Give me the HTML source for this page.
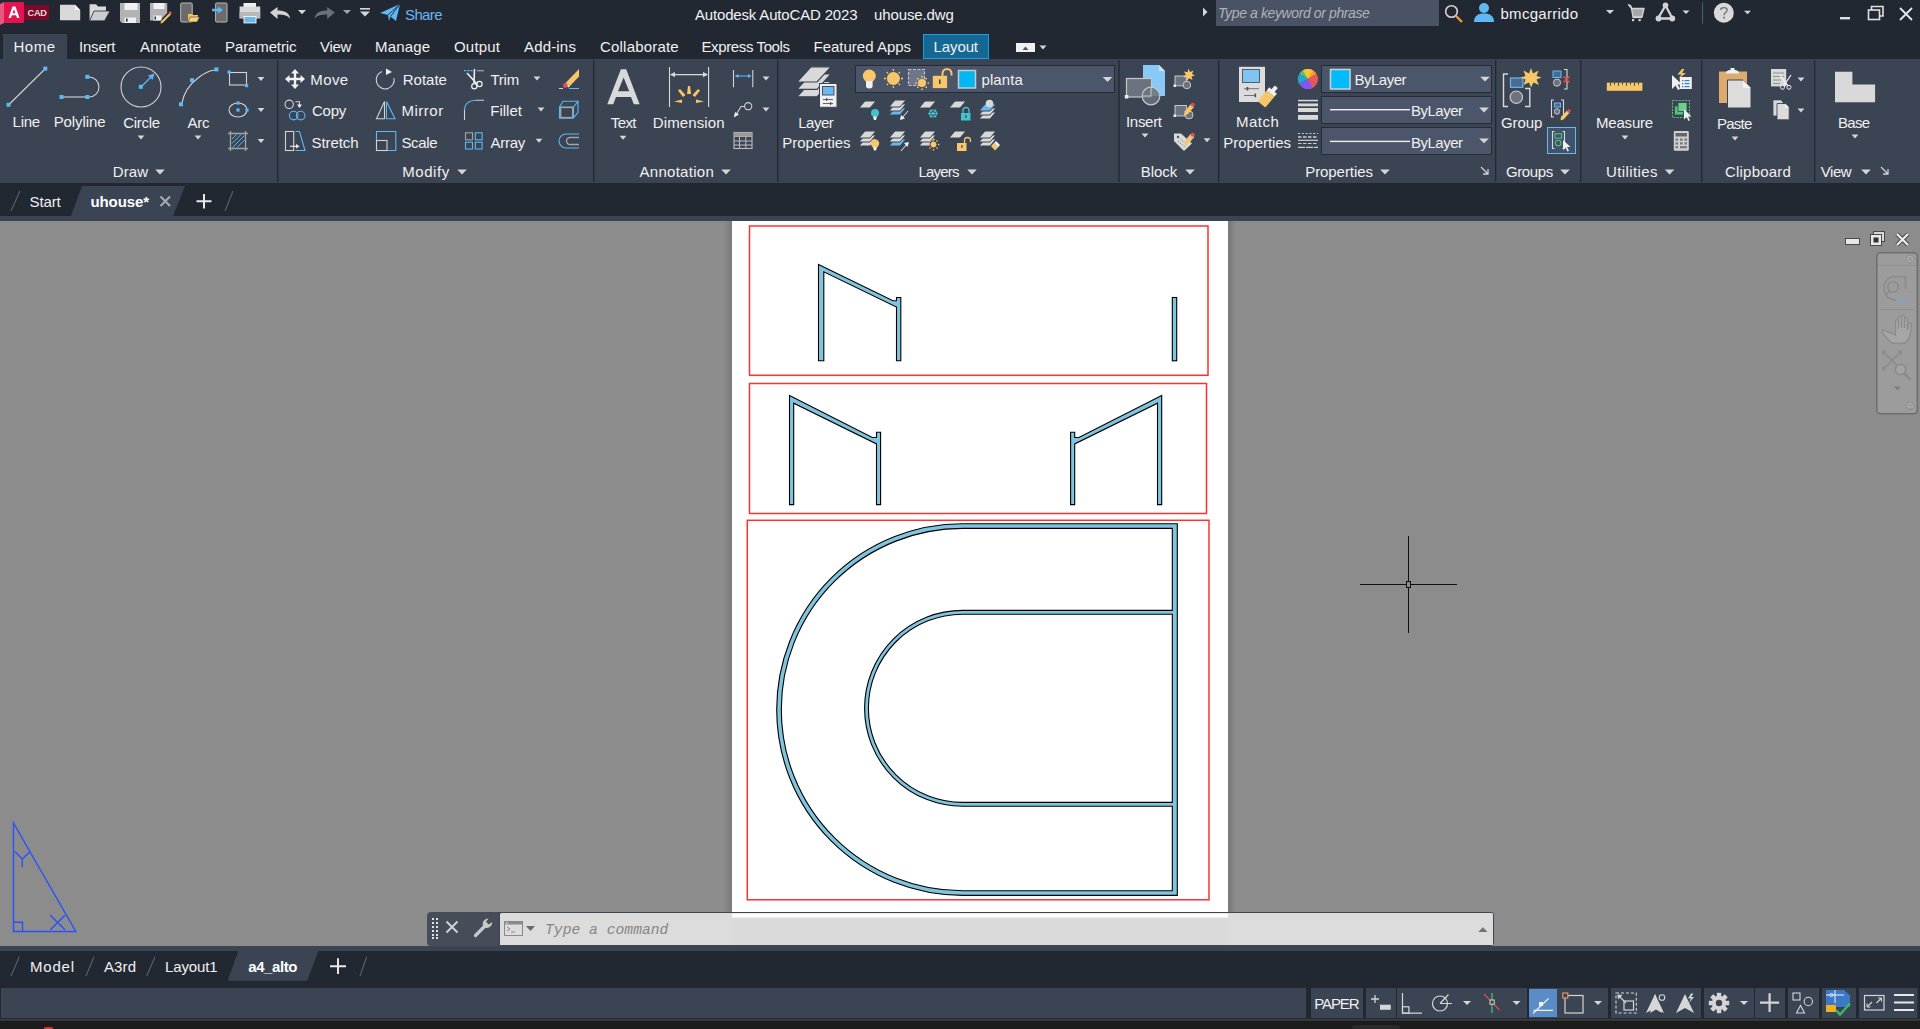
<!DOCTYPE html>
<html><head><meta charset="utf-8">
<style>
*{margin:0;padding:0;box-sizing:border-box}
html,body{width:1920px;height:1029px;overflow:hidden;background:#222832;font-family:"Liberation Sans",sans-serif;color:#f0f0f0}
.a{position:absolute}
.t{position:absolute;white-space:nowrap;line-height:15px;font-size:15px}
svg{position:absolute;overflow:visible}
</style></head><body>
<!-- backgrounds -->
<div class="a" style="left:0;top:0;width:1920px;height:59px;background:#222832"></div>
<div class="a" style="left:0;top:59px;width:1920px;height:124px;background:#3b4453"></div>
<div class="a" style="left:0;top:183px;width:1920px;height:33px;background:#222832"></div>
<div class="a" style="left:0;top:216px;width:1920px;height:5px;background:#3b4453"></div>
<div id="draw" class="a" style="left:0;top:221px;width:1920px;height:725px;background:#8c8c8c;overflow:hidden"></div>

<!-- paper -->
<div class="a" style="left:723px;top:221px;width:9px;height:700px;background:linear-gradient(90deg,#8c8c8c,#7c7c7c)"></div>
<div class="a" style="left:732px;top:221px;width:496px;height:700px;background:#fff"></div>
<div class="a" style="left:1228px;top:221px;width:8px;height:700px;background:linear-gradient(90deg,#7b7b7b 20%,#8c8c8c)"></div>
<svg class="a" style="left:0;top:0" width="1920" height="1029" viewBox="0 0 1920 1029">
 <g fill="none" stroke="#ff3030" stroke-width="1.5">
  <rect x="749.5" y="226" width="458.5" height="149.3"/>
  <rect x="749.5" y="383.5" width="457" height="130"/>
  <rect x="747.3" y="520.3" width="461.7" height="379.5"/>
 </g>
 <g fill="#80c4de" stroke="#000" stroke-width="1.1" stroke-linejoin="miter">
  <path d="M818.5,264.5 L893,300.8 H896.5 V297.5 H900.8 V360.8 H896.5 V307 L823.8,271.8 V360.8 H818.5 Z"/>
  <rect x="1172.3" y="297.5" width="4.4" height="63.3"/>
  <path d="M789.5,395.5 L872.3,437.5 H876.5 V432.3 H880.6 V504.6 H876.5 V443.9 L793.7,403.2 V504.6 H789.5 Z"/>
  <path d="M1161.7,395.5 L1078.9,437.5 H1074.7 V432.3 H1070.6 V504.6 H1074.7 V443.9 L1157.5,403.2 V504.6 H1161.7 Z"/>
  <path d="M1177.3,523.8 H962.5 A185.8 185.8 0 0 0 962.5,895.4 H1177.3 Z"/>
 </g>
 <g fill="#fff" stroke="#000" stroke-width="1.1">
  <path d="M1172.3,528.4 H962.5 A181.2 181.2 0 0 0 962.5,890.8 H1172.3 V806.2 H962.5 A97.9 97.9 0 0 1 962.5,610.4 H1172.3 Z"/>
  <path d="M1172.3,614.2 H962.5 A94.1 94.1 0 0 0 962.5,802.4 H1172.3 Z"/>
 </g>
 <!-- crosshair -->
 <g stroke="#111" stroke-width="1" fill="none" shape-rendering="crispEdges">
  <line x1="1360" y1="584.5" x2="1457" y2="584.5"/>
  <line x1="1408.5" y1="536" x2="1408.5" y2="633"/>
  <rect x="1406.5" y="581.5" width="4" height="6" fill="#8c8c8c"/>
 </g>
 <!-- UCS -->
 <g stroke="#2452ff" stroke-width="1.4" fill="none">
  <path d="M13.5,823 V931.5 H75.8 Z"/>
  <path d="M13.5,922.3 H22.5 V931.5"/>
  <path d="M15,851.8 L22.3,859 L29.9,851.8 M22.3,859 V867"/>
  <path d="M50.3,915.2 L64.9,929.8 M64.9,915.2 L50.3,929.8"/>
 </g>
</svg>
<!-- viewport controls -->
<svg class="a" style="left:0;top:0" width="1920" height="1029">
 <rect x="1845.5" y="238.5" width="14" height="6" fill="#e8e8e8" stroke="#4a4a4a" stroke-width="1"/>
 <rect x="1873.5" y="231.5" width="11" height="10" fill="#d8d8d8" stroke="#4a4a4a" stroke-width="1"/>
 <rect x="1870.5" y="234.5" width="11" height="11" fill="#e8e8e8" stroke="#4a4a4a" stroke-width="1"/>
 <rect x="1873.5" y="237.5" width="5" height="5" fill="#303030"/>
 <path d="M1897,234 L1908,245 M1908,234 L1897,245" stroke="#4a4a4a" stroke-width="4.2"/>
 <path d="M1897,234 L1908,245 M1908,234 L1897,245" stroke="#eeeeee" stroke-width="2.2"/>
 <rect x="1876.8" y="252.8" width="40.5" height="161" rx="4" fill="#9c9c9c" stroke="#6e6e6e" stroke-width="1.6"/>
 <line x1="1878.5" y1="265.5" x2="1916" y2="265.5" stroke="#8d8d8d" stroke-width="1"/>
 <line x1="1880" y1="309.5" x2="1914" y2="309.5" stroke="#8d8d8d" stroke-width="1"/>
 <circle cx="1910" cy="259" r="4" fill="#a9a9a9" stroke="#8d8d8d" stroke-width="1"/>
 <path d="M1908,257 L1912,261 M1912,257 L1908,261" stroke="#8d8d8d" stroke-width="1"/>
 <g fill="none" stroke="#8b8b8b" stroke-width="1.6">
  <path d="M1884.5,292 A11.5,11.5 0 0 1 1893,276.8 H1905.5 V289"/>
  <path d="M1884.5,292 C1886,297 1890,300 1896,300"/>
  <circle cx="1893" cy="287" r="5.3"/>
  <path d="M1889.5,291 L1886,295"/>
 </g>
 <text x="1896.5" y="303.5" font-size="9.5" font-weight="bold" fill="#8c9fbd" font-family="Liberation Sans">2D</text>
 <path d="M1885.5,331 C1883,329 1881.5,331 1883,333.5 L1889.5,341.5 C1891,343 1893,343.5 1896,343.5 H1901 C1906,343.5 1909,340 1910,335 L1911.5,325 C1912,322.5 1909,322 1908.5,324.5 L1907.5,330 V319.5 C1907.5,317 1904.5,317 1904.5,319.5 V328 V317 C1904.5,314.5 1901.5,314.5 1901.5,317 V328 V318 C1901.5,315.5 1898.5,315.5 1898.5,318 V329 V321.5 C1898.5,319 1895.5,319 1895.5,321.5 V335 Z" fill="#a6a6a6" stroke="#8b8b8b" stroke-width="1.3"/>
 <g fill="none" stroke="#8b8b8b" stroke-width="1.6">
  <path d="M1883,351.5 L1901,369.5 M1883,369.5 L1901,351.5"/>
  <circle cx="1900.5" cy="369.5" r="5.2" fill="#a3a3a3"/>
  <path d="M1904,373.5 L1910.5,379.5" stroke-width="2.6"/>
 </g>
 <path d="M1882,350.5 H1887 L1882,355.5 Z M1902,350.5 H1897 L1902,355.5 Z M1882,370.5 H1887 L1882,365.5 Z" fill="#8b8b8b"/>
 <path d="M1894,386.5 H1901 L1897.5,390.5 Z" fill="#7f7f7f"/>
 <circle cx="1910" cy="406" r="4" fill="#a9a9a9" stroke="#8d8d8d" stroke-width="1"/>
 <path d="M1907.5,405 H1912.5 M1908,407.5 L1910,409 L1912,407.5" stroke="#8d8d8d" stroke-width="0.9" fill="none"/>
</svg>
<!-- command line -->
<div class="a" style="left:732px;top:913px;width:496px;height:5px;background:linear-gradient(#ffffff 70%,#e4e4e4)"></div>
<div class="a" style="left:427px;top:912px;width:76px;height:34px;background:#474d58;border-radius:4px 0 0 4px"></div>
<div class="a" style="left:499px;top:912px;width:995px;height:34px;border:1px solid #40454e;border-radius:3px;box-shadow:inset 0 0 0 1px #ececec;background:linear-gradient(#ffffff00 0,#ffffff00 5px,#dcdcdc 5px)"></div>
<div class="a" style="left:500px;top:913px;width:232px;height:32px;background:#dcdcdc;border-radius:2px 0 0 0"></div>
<div class="a" style="left:1228px;top:913px;width:265px;height:32px;background:#dcdcdc;border-radius:0 2px 0 0"></div>
<div class="a" style="left:732px;top:918px;width:496px;height:27px;background:#dadada"></div>
<svg class="a" style="left:0;top:0" width="1920" height="1029">
 <g fill="#e0e0e0">
  <rect x="432" y="918" width="2" height="2"/><rect x="436" y="918" width="2" height="2"/>
  <rect x="432" y="922" width="2" height="2"/><rect x="436" y="922" width="2" height="2"/>
  <rect x="432" y="926" width="2" height="2"/><rect x="436" y="926" width="2" height="2"/>
  <rect x="432" y="930" width="2" height="2"/><rect x="436" y="930" width="2" height="2"/>
  <rect x="432" y="934" width="2" height="2"/><rect x="436" y="934" width="2" height="2"/>
  <rect x="432" y="937" width="2" height="2"/><rect x="436" y="937" width="2" height="2"/>
 </g>
 <path d="M446.5,921.5 L457.5,932.5 M457.5,921.5 L446.5,932.5" stroke="#d0d0d0" stroke-width="2"/>
 <path d="M475.5,935.5 L485.5,925.5" stroke="#c8c8c8" stroke-width="3.2" stroke-linecap="round"/>
 <path d="M484,927 A5.2,5.2 0 0 1 488.5,918.5 L486,921.8 L488.8,924.6 L492,922 A5.2,5.2 0 0 1 484,927 Z" fill="#c8c8c8"/>
 <rect x="504.5" y="921.5" width="18" height="14" fill="none" stroke="#8a8a8a"/>
 <rect x="504.5" y="921.5" width="18" height="3" fill="#8a8a8a"/>
 <rect x="506" y="922.3" width="1.5" height="1.5" fill="#e0e0e0"/>
 <path d="M507,927 L510,929 L507,931 M511,932 H515" stroke="#8a8a8a" fill="none"/>
 <path d="M526,926 H535 L530.5,931 Z" fill="#6a6a6a"/>
 <path d="M1478.2,932 H1487.6 L1482.9,927.2 Z" fill="#727272"/>
</svg>
<div class="t" style="left:545px;top:923px;font-family:'Liberation Mono',monospace;font-style:italic;font-size:14.7px;color:#858585">Type a command</div>

<div class="a" style="left:0;top:946px;width:1920px;height:5px;background:#3b4453"></div>
<div class="a" style="left:0;top:951px;width:1920px;height:37px;background:#222832"></div>
<div class="a" style="left:0;top:988px;width:1920px;height:30px;background:#3b4453"></div>
<div class="a" style="left:0;top:1018px;width:1920px;height:2px;background:#252b35"></div>
<div class="a" style="left:0;top:1020px;width:1920px;height:9px;background:#1c1c1c"></div>

<!--RIBBON-->
<div class="a" style="left:3px;top:34px;width:64px;height:25px;background:#3b4453"></div>
<div class="a" style="left:923px;top:34px;width:66px;height:25px;background:#156894;border:1px solid #16a0e6"></div>
<div class="a" style="left:1216px;top:0;width:223px;height:26px;background:#4a5366"></div>
<!-- combos -->
<div class="a" style="left:855px;top:65px;width:260px;height:28px;background:#4c566a;border:1px solid #262c36"></div>
<div class="a" style="left:1321px;top:65px;width:171px;height:28px;background:#4c566a;border:1px solid #262c36"></div>
<div class="a" style="left:1321px;top:96px;width:171px;height:28px;background:#4c566a;border:1px solid #262c36"></div>
<div class="a" style="left:1321px;top:127px;width:171px;height:28px;background:#4c566a;border:1px solid #262c36"></div>
<div class="a" style="left:1547px;top:127px;width:29px;height:27px;background:#41536b;border:1.5px solid #68b8f2"></div>
<svg class="a" style="left:0;top:0" width="1920" height="1029">
<defs>
 <path id="dd" d="M-3.4,-2 H3.4 L0,2 Z" fill="#d6d6d6"/>
 <path id="ddp" d="M-4.8,-2.4 H4.8 L0,2.4 Z" fill="#d6d6d6"/>
 <path id="lay" d="M6,0 H17 L11,7 H0 Z" fill="#d9d9d9" stroke="#3b4453" stroke-width="1"/>
 <path id="layb" d="M6,0 H17 L11,7 H0 Z" fill="#68b8f2" stroke="#3b4453" stroke-width="1"/>
</defs>
<!-- panel separators -->
<g fill="#232933">
 <rect x="277" y="60" width="1.3" height="122"/><rect x="593" y="60" width="1.3" height="122"/>
 <rect x="777" y="60" width="1.3" height="122"/><rect x="1118.3" y="60" width="1.3" height="122"/>
 <rect x="1218" y="60" width="1.3" height="122"/><rect x="1495" y="60" width="1.3" height="122"/>
 <rect x="1580" y="60" width="1.3" height="122"/><rect x="1701" y="60" width="1.3" height="122"/>
 <rect x="1814" y="60" width="1.3" height="122"/>
</g>
<!-- panel label arrows -->
<use href="#ddp" x="160" y="172"/><use href="#ddp" x="462" y="172"/><use href="#ddp" x="726" y="172"/>
<use href="#ddp" x="972" y="172"/><use href="#ddp" x="1190" y="172"/><use href="#ddp" x="1385" y="172"/>
<use href="#ddp" x="1565" y="172"/><use href="#ddp" x="1669.6" y="172"/><use href="#ddp" x="1866" y="172"/>
<path d="M1481,167 L1488,174 M1488,169 V174 H1483" stroke="#cfcfcf" stroke-width="1.3" fill="none"/>
<path d="M1881,167 L1888,174 M1888,169 V174 H1883" stroke="#cfcfcf" stroke-width="1.3" fill="none"/>
<!-- small dropdowns -->
<use href="#dd" x="141" y="137.6"/><use href="#dd" x="198" y="137.6"/>
<use href="#dd" x="261" y="79"/><use href="#dd" x="261" y="110"/><use href="#dd" x="261" y="141"/>
<use href="#dd" x="537" y="78.5"/><use href="#dd" x="541" y="109.6"/><use href="#dd" x="539" y="140.7"/>
<use href="#dd" x="623" y="137.7"/><use href="#dd" x="766" y="78.5"/><use href="#dd" x="766" y="109.6"/>
<use href="#dd" x="1145" y="135.5"/><use href="#dd" x="1207" y="140.2"/>
<use href="#dd" x="1625" y="137.6"/><use href="#dd" x="1735" y="138.5"/><use href="#dd" x="1801" y="79.5"/><use href="#dd" x="1801" y="110.4"/>
<use href="#dd" x="1855" y="136.5"/>
<use href="#ddp" x="1107.5" y="79.5"/><use href="#ddp" x="1485" y="79.2"/><use href="#ddp" x="1484" y="110"/><use href="#ddp" x="1484" y="140.8"/>
<!-- combo contents -->
<rect x="958.5" y="70.5" width="17" height="17.5" fill="#00b6f5" stroke="#c9c9c9" stroke-width="1.5"/>
<rect x="1330.5" y="69.5" width="19.5" height="19.5" fill="#00bcff" stroke="#d0d0d0" stroke-width="1.5"/>
<rect x="1330" y="109" width="80" height="1.4" fill="#f0f0f0"/>
<rect x="1330" y="140.7" width="80" height="1.4" fill="#f0f0f0"/>
</svg>
<!--/RIBBON-->
<!--ICONS-->
<svg class="a" style="left:0;top:0" width="1920" height="1029">
<!-- ===== title bar ===== -->
<!-- logo -->
<path d="M0,4 L4,2 V23 L0,25 Z" fill="#e6587e"/>
<rect x="4" y="2" width="20" height="21" rx="1" fill="#e3134f"/>
<rect x="24" y="5" width="25" height="15" fill="#7a0a2a"/>
<path d="M8.5,18 L12.5,6.5 H15.5 L19.5,18 H17 L16.1,15.3 H11.9 L11,18 Z M12.6,13.2 H15.4 L14,9 Z" fill="#fff" fill-rule="evenodd"/>
<text x="27.5" y="16.3" font-family="Liberation Sans" font-weight="bold" font-size="9.2" fill="#f2d4dc" letter-spacing="-0.2">CAD</text>
<!-- new -->
<path d="M60,4.7 H75 L80.2,9.9 V20.3 H60 Z" fill="#d9d9d9"/>
<path d="M75,4.7 V9.9 H80.2 Z" fill="#f2f2f2"/>
<!-- open -->
<path d="M89.6,20.8 V4.2 H96 L98,6.5 H106 V11 H110 L104.5,20.8 Z" fill="#d9d9d9"/>
<path d="M89.6,20.8 L94,11 H110 L104.5,20.8 Z" fill="#cdcdcd" stroke="#222832" stroke-width="0.8"/>
<!-- save -->
<path d="M120,3 H140 V23 H122 L120,21 Z" fill="#b3b3b3"/>
<rect x="124.5" y="3" width="13" height="7" fill="#f0f0f0"/>
<rect x="124.5" y="17.5" width="11.5" height="5.5" fill="#f0f0f0"/>
<rect x="126" y="18.5" width="1.6" height="3.2" fill="#333"/>
<!-- save as -->
<path d="M150,3 H167.2 V13 L160,20.5 H150 Z" fill="#b3b3b3"/>
<rect x="153.5" y="3" width="11" height="6" fill="#f0f0f0"/>
<rect x="153.5" y="15.5" width="8" height="5" fill="#f0f0f0"/>
<rect x="154.5" y="16.5" width="1.5" height="3" fill="#333"/>
<path d="M161,21.5 L169.5,13 L171,14.5 L162.5,23 L160.5,23.5 Z" fill="#f2c462"/>
<path d="M168.5,12.5 L170,11 L172,13 L170.5,14.5 Z" fill="#e34d4d"/>
<!-- open from mobile -->
<rect x="180.7" y="3" width="11.5" height="19" rx="1" fill="#6b6b6b" stroke="#b8b8b8" stroke-width="1"/>
<path d="M188,22 V14 H192 L193,15 H198 V17 H199.5 L197,22 Z" fill="#f2c462"/>
<path d="M188,22 L190,17 H199.5 L197,22 Z" fill="#f7d37a" stroke="#222832" stroke-width="0.5"/>
<!-- save to mobile -->
<rect x="215.6" y="3" width="11.4" height="19" rx="1" fill="#6b6b6b" stroke="#b8b8b8" stroke-width="1"/>
<path d="M212,8.8 H218 V6.5 L223,10 L218,13.5 V11.2 H212 Z" fill="#5db8f5"/>
<!-- plot -->
<rect x="243.5" y="3" width="12.5" height="6" fill="#f0f0f0"/>
<rect x="239.6" y="6.5" width="20.6" height="12" fill="#d9d9d9"/>
<rect x="239.6" y="12" width="20.6" height="6" fill="#b9b9b9"/>
<rect x="244" y="16.5" width="12" height="6.4" fill="#6ab8f2" stroke="#f0f0f0" stroke-width="1"/>
<!-- undo -->
<path d="M270,12.5 L277.5,6.9 V10.5 C284,10.5 290,12.5 290,18.9 C288,15.5 284,14.5 277.5,14.5 V18.9 Z" fill="#d3d3d3"/>
<use href="#dd" x="302" y="12" transform="translate(0,0)"/>
<!-- redo -->
<path d="M334.7,12.5 L327.2,6.9 V10.5 C320.7,10.5 314.7,12.5 314.7,18.9 C316.7,15.5 320.7,14.5 327.2,14.5 V18.9 Z" fill="#6b7079"/>
<path d="M343,10 H351 L347,14 Z" fill="#a5a5a5"/>
<path d="M298,10 H306 L302,14 Z" fill="#d6d6d6"/>
<!-- customize -->
<rect x="360" y="8" width="10" height="1.6" fill="#d6d6d6"/>
<path d="M360,11.5 H370 L365,16.5 Z" fill="#d6d6d6"/>
<!-- share -->
<path d="M380,13 L400,4 L396,21 L390.5,16.5 L389,21 L388,15 Z" fill="#5db8f5"/>
<path d="M388,15 L400,4 M390.5,16.5 L400,4" stroke="#222832" stroke-width="0.9"/>
<!-- search arrow -->
<path d="M1203,7.5 L1207.5,12 L1203,16.5 Z" fill="#d6d6d6"/>
<!-- magnifier -->
<circle cx="1451.5" cy="11.5" r="5.8" fill="none" stroke="#d6d6d6" stroke-width="1.6"/>
<path d="M1455.5,15.5 L1462,22" stroke="#e2a040" stroke-width="2.4"/>
<!-- user -->
<circle cx="1484" cy="8" r="5" fill="#5db8f5"/>
<path d="M1474,22 C1474,15 1479,13.5 1484,13.5 C1489,13.5 1494,15 1494,22 Z" fill="#5db8f5"/>
<path d="M1606,10 H1614 L1610,14 Z" fill="#d6d6d6"/>
<!-- cart -->
<path d="M1628.5,4.5 L1631,6 L1633,17 H1642 L1644,8.5 H1631.5 Z" fill="#a8a8a8" stroke="#d3d3d3" stroke-width="1.3" stroke-linejoin="round"/>
<path d="M1632.5,17.5 H1642" stroke="#d3d3d3" stroke-width="1.3"/>
<rect x="1632" y="19" width="2.2" height="2.2" fill="#d3d3d3"/><rect x="1638.5" y="19" width="2.2" height="2.2" fill="#d3d3d3"/>
<!-- A360 -->
<path d="M1665.5,5.5 L1672.5,18.5 H1658 Z" fill="none" stroke="#d3d3d3" stroke-width="2.3" stroke-linejoin="round"/>
<circle cx="1665.5" cy="5.3" r="2.8" fill="#d3d3d3"/><circle cx="1658.5" cy="18.5" r="2.9" fill="#d3d3d3"/><circle cx="1672.3" cy="18.5" r="2.9" fill="#d3d3d3"/>
<path d="M1682.5,10.5 H1689.5 L1686,14 Z" fill="#d6d6d6"/>
<rect x="1702" y="2.2" width="1.1" height="21.5" fill="#4a5a70"/>
<!-- help -->
<circle cx="1723.8" cy="12.7" r="10" fill="#d9d9d9"/>
<path d="M1720.6,10 C1720.6,6.8 1727.2,6.8 1727.2,10 C1727.2,12.6 1724,12.6 1724,15.2" fill="none" stroke="#6f6f6f" stroke-width="1.3"/>
<rect x="1723.2" y="16.8" width="1.7" height="1.7" fill="#6f6f6f"/>
<path d="M1744,10.8 H1751 L1747.5,14.3 Z" fill="#d6d6d6"/>
<!-- window buttons -->
<rect x="1840" y="17" width="10" height="2.4" fill="#e0e0e0"/>
<rect x="1868.5" y="10" width="11" height="9.5" fill="none" stroke="#e0e0e0" stroke-width="1.6"/>
<path d="M1871.5,10 V6.5 H1883 V16 H1879.5" fill="none" stroke="#e0e0e0" stroke-width="1.6"/>
<path d="M1900,8 L1912,20 M1912,8 L1900,20" stroke="#e8e8e8" stroke-width="1.8"/>
<!-- layout tab icon -->
<rect x="1016" y="43" width="19" height="9" fill="#f0f0f0"/>
<path d="M1022.5,50 H1028.5 L1025.5,46.5 Z" fill="#555"/>
<path d="M1039.5,45.5 H1046.5 L1043,49.5 Z" fill="#d6d6d6"/>

<!-- ===== Draw panel ===== -->
<g stroke="#d3d3d3" stroke-width="1.1" fill="none">
 <line x1="9" y1="104.5" x2="45" y2="69"/>
 <path d="M63,97 H86"/>
 <path d="M89,77 A10,10 0 0 1 89,97"/>
 <circle cx="141" cy="87" r="20"/>
 <path d="M182,103 C184,92 190,84 198,78 C204,73 210,70.5 215,70"/>
 <rect x="229.5" y="72.5" width="17" height="12.5"/>
 <ellipse cx="238" cy="110" rx="9" ry="7"/>
 <path d="M230.5,131 V151 M245.5,131 V151 M228,133.5 H248 M228,148.5 H248" stroke="#a3a3a3" stroke-width="1.3"/>
</g>
<g fill="#5db8f5">
 <rect x="6.5" y="102.8" width="4" height="4"/><rect x="43.3" y="66.6" width="4" height="4"/>
 <rect x="59.5" y="95" width="4" height="4"/><rect x="85.3" y="95" width="4" height="4"/><rect x="85.3" y="74.8" width="4" height="4"/>
 <rect x="138.8" y="84.8" width="4" height="4"/>
 <rect x="179" y="102.3" width="4" height="4"/><rect x="190" y="78.2" width="4" height="4"/><rect x="214.4" y="67.4" width="4" height="4"/>
 <rect x="227.5" y="70.5" width="3.2" height="3.2"/><rect x="245" y="84" width="3.2" height="3.2"/>
 <rect x="236.4" y="101.4" width="3.2" height="3.2"/><rect x="236.4" y="108.4" width="3.2" height="3.2"/><rect x="245.4" y="108.4" width="3.2" height="3.2"/>
</g>
<path d="M141,87 L153,75" stroke="#5db8f5" stroke-width="1.3"/>
<path d="M154.5,73.5 L148,75.5 L152.5,80 Z" fill="#5db8f5"/>
<path d="M232,139 L236.5,134.5 M232,143.5 L241,134.5 M232.5,147.5 L244.5,135.5 M237,147.5 L244.5,140" stroke="#5db8f5" stroke-width="1"/>
<rect x="231" y="134" width="14" height="14" fill="none" stroke="#9aa0a8" stroke-width="0"/>

<!-- ===== Modify panel ===== -->
<!-- move -->
<path d="M295,69 L299,73.5 H296.2 V77.8 H300.5 V75 L305,79 L300.5,83 V80.2 H296.2 V84.5 H299 L295,89 L291,84.5 H293.8 V80.2 H289.5 V83 L285,79 L289.5,75 V77.8 H293.8 V73.5 H291 Z" fill="#f2f2f2"/>
<!-- copy -->
<circle cx="289.2" cy="104.3" r="4.2" fill="none" stroke="#d3d3d3" stroke-width="1.1"/>
<path d="M295.5,101.8 H299.5 V105" fill="none" stroke="#d3d3d3" stroke-width="1.1"/>
<path d="M297,104.5 H302 L299.5,108 Z" fill="#f0f0f0"/>
<circle cx="293.7" cy="115.6" r="4.3" fill="none" stroke="#5db8f5" stroke-width="1.1"/>
<circle cx="300.7" cy="115.6" r="4.3" fill="none" stroke="#5db8f5" stroke-width="1.1"/>
<!-- stretch -->
<rect x="285.5" y="131.5" width="8.2" height="19" fill="none" stroke="#d3d3d3" stroke-width="1.1"/>
<path d="M295.5,131.5 H299.5 L305,150.5 H295.5" fill="none" stroke="#5db8f5" stroke-width="1.1"/>
<path d="M290,146.3 H296.5" stroke="#f0f0f0" stroke-width="1.1"/>
<path d="M296,144 L299.5,146.3 L296,148.6 Z" fill="#f0f0f0"/>
<!-- rotate -->
<path d="M382,71.5 A9,9 0 1 0 394,78" fill="none" stroke="#d3d3d3" stroke-width="1.1"/>
<path d="M386,68.5 L392,72 L386,75 Z" fill="#f0f0f0"/>
<!-- mirror -->
<path d="M376.5,118.8 L384.5,101.5 V118.8 Z" fill="none" stroke="#d3d3d3" stroke-width="1.1"/>
<path d="M386.5,118.8 V101.5 L395,118.8 Z" fill="none" stroke="#5db8f5" stroke-width="1.1"/>
<!-- scale -->
<path d="M376.5,140 V131.5 H395.8 V150.5 H387" fill="none" stroke="#5db8f5" stroke-width="1.1"/>
<rect x="376.5" y="140.5" width="10.5" height="10" fill="none" stroke="#d3d3d3" stroke-width="1.1"/>
<!-- trim -->
<path d="M464,70.7 H473" stroke="#5db8f5" stroke-width="1.3" stroke-dasharray="2.2,1"/>
<path d="M477,70.7 H484" stroke="#9aa0a8" stroke-width="1.3"/>
<path d="M467,73 L477,84 M474.5,69 L474,83" stroke="#f0f0f0" stroke-width="1.6"/>
<circle cx="474.3" cy="86.3" r="2.6" fill="none" stroke="#f0f0f0" stroke-width="1.2"/>
<circle cx="479.5" cy="84" r="2.6" fill="none" stroke="#f0f0f0" stroke-width="1.2"/>
<!-- erase -->
<path d="M566,82.5 L579,69 V76.5 L570,86 Z" fill="#f6c668"/>
<path d="M566,82.5 L570,86 L568.5,87.5 L564.5,84 Z" fill="#f0f0f0"/>
<circle cx="565.3" cy="85.5" r="2.4" fill="#e34d4d"/>
<path d="M559,88.5 H563" stroke="#d3d3d3" stroke-width="1"/>
<path d="M569,88.5 H579" stroke="#5db8f5" stroke-width="1"/>
<!-- fillet -->
<path d="M464.5,110 C464.5,104 469,100.3 476,100.3" fill="none" stroke="#5db8f5" stroke-width="1.1"/>
<path d="M476,100.3 H484 M464.5,110 V120" stroke="#d3d3d3" stroke-width="1.1"/>
<!-- 3d -->
<path d="M559.5,107 L563,101.3 H578 V112.5 L573,118.2 H559.5 Z M559.5,107 H573.5 L578,101.3 M573.5,107 V118.2" fill="none" stroke="#5db8f5" stroke-width="1.1"/>
<rect x="560.7" y="107.5" width="12" height="10" fill="none" stroke="#a5a5a5" stroke-width="1.3"/>
<!-- array -->
<rect x="465.5" y="132.8" width="7" height="7" fill="none" stroke="#a5a5a5" stroke-width="1.1"/>
<g fill="none" stroke="#5db8f5" stroke-width="1.1">
 <rect x="475.3" y="132.8" width="6.8" height="7"/><rect x="465.5" y="142.2" width="7" height="6.8"/><rect x="475.3" y="142.2" width="6.8" height="6.8"/>
</g>
<!-- offset -->
<path d="M579,134 H566 A7,7 0 0 0 566,148 H579" fill="none" stroke="#5db8f5" stroke-width="1.1"/>
<path d="M579,137.5 H570 A3.5,3.5 0 0 0 570,144.5 H579" fill="none" stroke="#a5a5a5" stroke-width="1.3"/>

<!-- ===== Annotation ===== -->
<path d="M607.3,104.2 L620.9,69.2 H626.2 L639.6,104.2 H633.8 L631,97 H616 L613.2,104.2 Z M618,91.2 H629.2 L623.6,77.5 Z" fill="#d9d9d9" fill-rule="evenodd"/>
<path d="M669.5,67 V107 M708.6,67 V107 M671,74.6 H707" stroke="#d9d9d9" stroke-width="1.1" fill="none"/>
<path d="M670,74.6 L675,72 V77.2 Z M708,74.6 L703,72 V77.2 Z" fill="#d9d9d9"/>
<g fill="#f6c668">
 <path d="M688,86 H690 L691,94 H687 Z"/>
 <path d="M678,90.5 L680,89 L685.5,95 L683,97 Z"/>
 <path d="M700,90.5 L698,89 L692.5,95 L695,97 Z"/>
 <path d="M674,101.5 L682,99.5 V103 Z"/>
 <path d="M704,101.5 L696,99.5 V103 Z"/>
</g>
<path d="M733.5,70 V87.2 M752.8,70 V87.2" stroke="#d3d3d3" stroke-width="1.1"/>
<path d="M735.5,76 H750.5" stroke="#5db8f5" stroke-width="1.1"/>
<path d="M735,76 L738.5,74 V78 Z M751.5,76 L748,74 V78 Z" fill="#5db8f5"/>
<circle cx="748.2" cy="106.2" r="3.6" fill="none" stroke="#d3d3d3" stroke-width="1.1"/>
<path d="M744.6,106.5 H741 L736,115" fill="none" stroke="#d3d3d3" stroke-width="1.1"/>
<path d="M733.8,117.5 L735,112 L739,114.5 Z" fill="#f0f0f0"/>
<rect x="734" y="132.5" width="18" height="16" fill="none" stroke="#bdbdbd" stroke-width="1.1"/>
<path d="M734,136.5 H752 M734,141 H752 M734,145 H752 M739.5,136.5 V148.5 M745.8,136.5 V148.5" stroke="#bdbdbd" stroke-width="1"/>
<rect x="734" y="132.5" width="18" height="4" fill="#9a9a9a"/>

<!-- ===== Layers ===== -->
<path d="M797,96.8 L811,81.5 H831 L817,96.8 Z" fill="#d9d9d9" stroke="#3b4453" stroke-width="1.2"/>
<path d="M797,89.3 L811,74 H831 L817,89.3 Z" fill="#d9d9d9" stroke="#3b4453" stroke-width="1.2"/>
<path d="M797,82 L811,66.8 H831 L817,82 Z" fill="#d9d9d9" stroke="#3b4453" stroke-width="1.2"/>
<rect x="819.5" y="83.5" width="17.5" height="23.8" fill="#efefef" stroke="#3b4453" stroke-width="1"/>
<rect x="822.5" y="86.5" width="11.5" height="8.5" fill="#6ab8f2" stroke="#4a5366" stroke-width="1"/>
<path d="M823,99.5 H833 M823,103.5 H833" stroke="#555" stroke-width="0.9"/>
<rect x="826" y="98" width="1.2" height="3" fill="#555"/><rect x="830" y="102" width="1.2" height="3" fill="#555"/>
<!-- combo row icons -->
<circle cx="869.3" cy="76" r="6.5" fill="#f8c76a"/>
<path d="M866,81 H872.6 V86 A3.3,2.5 0 0 1 866,86 Z" fill="#f0f0f0"/>
<circle cx="893.4" cy="78.5" r="6.5" fill="#f8c76a"/>
<g stroke="#f8c76a" stroke-width="1.3">
 <path d="M893.4,69 V71 M893.4,86 V88 M884,78.5 H886 M901,78.5 H903 M886.8,72 L888.2,73.4 M898.6,83.6 L900,85 M900,72 L898.6,73.4 M888.2,83.6 L886.8,85"/>
</g>
<rect x="908.5" y="69.5" width="16" height="16" fill="#6f7888" stroke="#c2c2c2" stroke-width="1.2" stroke-dasharray="3,1.5"/>
<circle cx="922" cy="83" r="4" fill="#f8c76a"/>
<g fill="#f8c76a"><rect x="921.3" y="76" width="1.5" height="1.5"/><rect x="921.3" y="88.5" width="1.5" height="1.5"/><rect x="915" y="82.3" width="1.5" height="1.5"/><rect x="927.5" y="82.3" width="1.5" height="1.5"/><rect x="917" y="78" width="1.5" height="1.5"/><rect x="925.5" y="78" width="1.5" height="1.5"/><rect x="917" y="86.5" width="1.5" height="1.5"/><rect x="925.5" y="86.5" width="1.5" height="1.5"/></g>
<path d="M942.5,76 V73.5 A4.5,4.5 0 0 1 951.5,73.5 V75.5" fill="none" stroke="#f8c76a" stroke-width="2"/>
<rect x="932.8" y="75.8" width="14.3" height="12.3" fill="#f8c76a"/>
<rect x="939" y="79.5" width="1.6" height="4.5" fill="#3b4453"/>
<!-- layer row 2 -->
<g transform="translate(859,101)">
 <use href="#lay" x="0" y="0"/>
 <circle cx="16" cy="12" r="4" fill="#45c0cc"/><path d="M14,15.5 H18 L17,19 H15 Z" fill="#f0f0f0"/>
</g>
<g transform="translate(889,100)">
 <use href="#layb" x="0" y="8"/><use href="#lay" x="0" y="4"/><use href="#lay" x="0" y="0"/>
 <path d="M19,11 L13,18" stroke="#f0f0f0" stroke-width="1"/><path d="M11,20 L12,15 L16,18.5 Z" fill="#f0f0f0"/>
</g>
<g transform="translate(919,101)">
 <use href="#lay" x="0" y="0"/>
 <g stroke="#45c0cc" stroke-width="1.1" fill="none"><circle cx="14" cy="12.5" r="3.5"/><path d="M9,12.5 H19 M11,8.5 L17,16.5 M17,8.5 L11,16.5"/></g>
</g>
<g transform="translate(949,101)">
 <use href="#lay" x="0" y="0"/>
 <path d="M14,12 V9.5 A3,3 0 0 1 20,9.5 V12" fill="none" stroke="#45c0cc" stroke-width="1.3"/>
 <rect x="12" y="12" width="9.5" height="7.5" fill="#45c0cc"/><rect x="16.3" y="14" width="1.2" height="3" fill="#3b4453"/>
</g>
<g transform="translate(979,100)">
 <use href="#lay" x="0" y="12"/><use href="#lay" x="0" y="8"/><use href="#layb" x="0" y="4"/>
 <circle cx="10.5" cy="3.5" r="3.8" fill="#d9d9d9"/>
</g>
<!-- layer row 3 -->
<g transform="translate(859,131)">
 <use href="#lay" x="0" y="8"/><use href="#lay" x="0" y="4"/><use href="#lay" x="0" y="0"/>
 <circle cx="16" cy="12.5" r="4.2" fill="#f8c76a"/><path d="M14,16 H18 L17,19.5 H15 Z" fill="#f0f0f0"/>
</g>
<g transform="translate(889,131)">
 <use href="#layb" x="0" y="8"/><use href="#lay" x="0" y="4"/><use href="#lay" x="0" y="0"/>
 <path d="M12,20 L18,13" stroke="#f0f0f0" stroke-width="1"/><path d="M20,11 L15,12 L18.5,16 Z" fill="#f0f0f0"/>
</g>
<g transform="translate(919,131)">
 <use href="#lay" x="0" y="8"/><use href="#lay" x="0" y="4"/><use href="#lay" x="0" y="0"/>
 <circle cx="14.5" cy="13.5" r="3.5" fill="#f8c76a" stroke="#3b4453" stroke-width="1"/>
 <g fill="#f8c76a"><rect x="13.8" y="7.5" width="1.4" height="1.4"/><rect x="13.8" y="18" width="1.4" height="1.4"/><rect x="8.5" y="12.8" width="1.4" height="1.4"/><rect x="19" y="12.8" width="1.4" height="1.4"/><rect x="10.3" y="9.3" width="1.4" height="1.4"/><rect x="17.3" y="9.3" width="1.4" height="1.4"/><rect x="10.3" y="16.3" width="1.4" height="1.4"/><rect x="17.3" y="16.3" width="1.4" height="1.4"/></g>
</g>
<g transform="translate(949,131)">
 <use href="#lay" x="0" y="0"/>
 <path d="M15.5,12 V9.5 A3,3 0 0 1 21.5,9.5 V11" fill="none" stroke="#f8c76a" stroke-width="1.3"/>
 <rect x="8" y="12" width="9.5" height="8" fill="#f8c76a"/><rect x="12.3" y="14" width="1.2" height="3" fill="#3b4453"/>
</g>
<g transform="translate(979,131)">
 <use href="#lay" x="0" y="8"/><use href="#lay" x="0" y="4"/><use href="#lay" x="0" y="0"/>
 <path d="M12,15 L16,19.5 L19,16.5 L15,12 Z" fill="#f8c76a"/>
 <path d="M15,12 L19,16.5 L21,14 L17,10 Z" fill="#f0f0f0"/>
</g>

<!-- ===== Block ===== -->
<path d="M1143,64.9 H1159 L1165,71 V96 H1143 Z" fill="#88c9f7"/>
<path d="M1159,64.9 V71 H1165 Z" fill="#c8e6fb"/>
<rect x="1126.5" y="78.5" width="25" height="18.5" fill="#6b7280" stroke="#c8c8c8" stroke-width="1.2"/>
<circle cx="1151" cy="96" r="8.8" fill="#6b7280" stroke="#c8c8c8" stroke-width="1.2" fill-opacity="0.85"/>
<path d="M1142.2,96 H1151 V87.2" fill="none" stroke="#c8c8c8" stroke-width="1"/>
<rect x="1124.8" y="95" width="3.5" height="3.5" fill="#f0f0f0"/>
<rect x="1175" y="76" width="11.4" height="9.8" fill="#6b7280" stroke="#c8c8c8" stroke-width="1"/>
<circle cx="1186.9" cy="85" r="3.8" fill="#6b7280" stroke="#c8c8c8" stroke-width="1"/>
<rect x="1173.5" y="84.5" width="2.5" height="2.5" fill="#f0f0f0"/>
<path d="M1188.6,68.5 L1190,72 L1193.5,70.5 L1192,74 L1195,75.5 L1191.5,76.5 L1192.5,80 L1189,78.2 L1187,81 L1186.5,77.5 L1183,77 L1185.8,74.8 L1184,71.5 L1187.5,72.2 Z" fill="#f8c76a"/>
<rect x="1175" y="105.5" width="11.4" height="10.4" fill="#6b7280" stroke="#c8c8c8" stroke-width="1"/>
<circle cx="1189" cy="114.9" r="4" fill="#6b7280" stroke="#c8c8c8" stroke-width="1"/>
<rect x="1173.5" y="114.5" width="2.5" height="2.5" fill="#f0f0f0"/>
<path d="M1184.5,111.5 L1191,104 L1194,107 L1187.5,114.5 L1184,115.5 Z" fill="#f8c76a"/>
<circle cx="1192.8" cy="104.8" r="2" fill="#e34d4d"/>
<path d="M1174,133.5 H1181 L1192,143.5 L1184,151 L1174,141 Z" fill="#d9d9d9"/>
<circle cx="1178" cy="137" r="1.2" fill="#555"/>
<path d="M1178,141 L1185,147 M1180.5,139 L1187,145" stroke="#777" stroke-width="0.8" stroke-dasharray="1.5,1"/>
<path d="M1184.5,141.5 L1191,134 L1194,137 L1187.5,144.5 L1184,145.5 Z" fill="#f8c76a" stroke="#d9d9d9" stroke-width="0.6"/>
<circle cx="1192.8" cy="134.8" r="2" fill="#e34d4d"/>

<!-- ===== Properties ===== -->
<rect x="1239" y="66.8" width="26" height="35.2" fill="#dcdcdc"/>
<rect x="1242.5" y="69.5" width="17" height="13" fill="#80c4f5" stroke="#4a4f58" stroke-width="0.9"/>
<path d="M1244,88.7 H1259 M1244,95.5 H1256" stroke="#666" stroke-width="0.9"/>
<rect x="1246.5" y="87" width="1.8" height="3.5" fill="#555"/><rect x="1254.5" y="93.5" width="1.6" height="3.8" fill="#555"/>
<g transform="translate(1266,99) rotate(40)">
 <rect x="-5" y="-7" width="10" height="14" fill="#f6c668"/>
 <rect x="-5" y="-11" width="10" height="4" fill="#f0f0f0"/>
 <rect x="-2" y="-16" width="4" height="6" fill="#f0f0f0"/>
</g>
<g transform="translate(1307.9,79)">
 <path d="M0,0 L0,-10 A10,10 0 0 1 8.66,-5 Z" fill="#ff9533"/>
 <path d="M0,0 L8.66,-5 A10,10 0 0 1 8.66,5 Z" fill="#e85a5a"/>
 <path d="M0,0 L8.66,5 A10,10 0 0 1 -0,10 Z" fill="#e85a5a"/>
 <path d="M0,0 L0,10 A10,10 0 0 1 -8.66,5 Z" fill="#7c5af0"/>
 <path d="M0,0 L-8.66,5 A10,10 0 0 1 -8.66,-5 Z" fill="#22a8d0"/>
 <path d="M0,0 L-8.66,-5 A10,10 0 0 1 0,-10 Z" fill="#55c07a"/>
 <path d="M0,0 L-5,-8.66 A10,10 0 0 1 5,-8.66 Z" fill="#ffc233"/>
 <path d="M0,0 L5,8.66 A10,10 0 0 1 -5,8.66 Z" fill="#8a55ee"/>
</g>
<g fill="#d9d9d9">
 <rect x="1298" y="99.8" width="20" height="1.5"/><rect x="1298" y="103.5" width="20" height="2.8"/>
 <rect x="1298" y="108" width="20" height="4"/><rect x="1298" y="115" width="20" height="4.8"/>
</g>
<g stroke="#cfcfcf" stroke-width="1.2">
 <path d="M1298,133.5 H1318" stroke-dasharray="2,1.8"/>
 <path d="M1298,137 H1318" stroke-dasharray="3.5,1.5" stroke-width="1.5"/>
 <path d="M1298,140.3 H1318"/>
 <path d="M1298,143.5 H1318" stroke-dasharray="3.5,1.5"/>
 <path d="M1298,147.3 H1318" stroke-dasharray="7,1"/>
</g>

<!-- ===== Groups ===== -->
<path d="M1508,74 H1503.5 V106.5 H1508 M1525,88.5 H1529.8 V106.5 H1525" fill="none" stroke="#d9d9d9" stroke-width="1.4"/>
<rect x="1510.5" y="78" width="12.4" height="9.3" fill="#4a6a90" stroke="#68b8f2" stroke-width="1.2"/>
<circle cx="1516.3" cy="97.2" r="6.2" fill="#6b7280" stroke="#c8c8c8" stroke-width="1.2"/>
<path d="M1531,68 L1533,73.5 L1538.5,70.5 L1536.5,76 L1541.5,77.5 L1536.5,79.5 L1539,85 L1533.5,82.5 L1531,87.5 L1529,82.5 L1523.5,85 L1525.5,79.5 L1520.5,77.5 L1525.5,76 L1523.5,70.5 L1529,73.5 Z" fill="#f8c76a"/>
<path d="M1564,69.5 H1567 V89 H1564" fill="none" stroke="#d9d9d9" stroke-width="1.1"/>
<rect x="1553" y="71" width="8" height="6.5" fill="#4a6a90" stroke="#68b8f2" stroke-width="1"/>
<circle cx="1557" cy="82.6" r="3.6" fill="#6b7280" stroke="#c8c8c8" stroke-width="1"/>
<path d="M1563.5,76.5 L1569.5,82.5 M1569.5,76.5 L1563.5,82.5" stroke="#ee4444" stroke-width="1.6"/>
<path d="M1554,100 H1551.5 V117 H1554 M1561,100 H1563.5 V117 H1561" fill="none" stroke="#d9d9d9" stroke-width="1.1"/>
<rect x="1554.5" y="103" width="6" height="4" fill="#4a6a90" stroke="#68b8f2" stroke-width="1"/>
<circle cx="1557" cy="111.5" r="2.7" fill="#6b7280" stroke="#c8c8c8" stroke-width="1"/>
<path d="M1561,117 L1567,110.5 L1569.5,113 L1563.5,119.5 L1560.5,120.3 Z" fill="#f8c76a"/>
<circle cx="1569" cy="111" r="1.8" fill="#e34d4d"/>
<path d="M1554.5,131.5 H1552.5 V148.5 H1554.5 M1562.5,131.5 H1564.5 V148.5 H1562.5" fill="none" stroke="#d9d9d9" stroke-width="1.1"/>
<rect x="1555" y="133.7" width="6.5" height="4.5" fill="none" stroke="#55c07a" stroke-width="1.1"/>
<circle cx="1558.2" cy="143" r="2.8" fill="none" stroke="#55c07a" stroke-width="1.1"/>
<path d="M1563,140 V150 L1565.5,147.5 L1567.5,151.5 L1569,150.8 L1567,147 H1570.5 Z" fill="#f0f0f0"/>

<!-- ===== Utilities ===== -->
<rect x="1606.8" y="82.7" width="35.6" height="8.1" fill="#f6c668"/>
<g fill="#3b4453"><rect x="1610" y="82.7" width="1" height="3"/><rect x="1614" y="82.7" width="1" height="2"/><rect x="1618" y="82.7" width="1" height="3"/><rect x="1622" y="82.7" width="1" height="2"/><rect x="1626" y="82.7" width="1" height="3"/><rect x="1630" y="82.7" width="1" height="2"/><rect x="1634" y="82.7" width="1" height="3"/><rect x="1638" y="82.7" width="1" height="2"/></g>
<rect x="1679.8" y="77" width="12" height="12" fill="#f0f0f0"/>
<g fill="#2a7fd0"><rect x="1682" y="80" width="1.3" height="1.3"/><rect x="1684.5" y="80" width="5" height="1.2"/><rect x="1682" y="83" width="1.3" height="1.3"/><rect x="1684.5" y="83" width="5" height="1.2"/><rect x="1682" y="86" width="1.3" height="1.3"/><rect x="1684.5" y="86" width="5" height="1.2"/></g>
<path d="M1672,75 V89 L1675.5,85.5 L1678,90 L1680,89 L1677.5,84.5 H1682 Z" fill="#f0f0f0"/>
<path d="M1682,69 L1677.5,74.5 H1681.5 L1679,78.5 L1686,73 H1682 L1684.5,69 Z" fill="#f8c76a"/>
<rect x="1672.5" y="100.5" width="17" height="17" fill="none" stroke="#55c07a" stroke-width="1.1" stroke-dasharray="2,1.2"/>
<rect x="1674.5" y="106" width="9" height="9" fill="#55c07a" stroke="#3b4453" stroke-width="0.8"/>
<rect x="1678" y="102.5" width="9" height="9" fill="#6ccf8e" stroke="#3b4453" stroke-width="0.8"/>
<path d="M1684,109 V119.5 L1686.5,117 L1688.5,121 L1690,120.3 L1688,116.5 H1691.5 Z" fill="#f0f0f0"/>
<rect x="1673.8" y="131" width="15" height="19.8" rx="1" fill="#d0d0d0"/>
<rect x="1675.5" y="133" width="11.5" height="3.5" fill="#666"/>
<g fill="#777"><rect x="1675.5" y="138.5" width="2.6" height="2.2"/><rect x="1680" y="138.5" width="2.6" height="2.2"/><rect x="1684.4" y="138.5" width="2.6" height="2.2"/><rect x="1675.5" y="142.3" width="2.6" height="2.2"/><rect x="1680" y="142.3" width="2.6" height="2.2"/><rect x="1684.4" y="142.3" width="2.6" height="2.2"/><rect x="1675.5" y="146.1" width="2.6" height="2.2"/><rect x="1680" y="146.1" width="7" height="2.2"/></g>

<!-- ===== Clipboard ===== -->
<rect x="1719" y="71.5" width="28" height="31.5" fill="#dbab70"/>
<path d="M1726,73.5 C1726,70.5 1729,70 1730.5,70 V68 H1734.5 V70 C1736,70 1739,70.5 1739,73.5 Z" fill="#f0f0f0"/>
<path d="M1727.5,80 H1743 L1751,88 V108 H1727.5 Z" fill="#dcdcdc" stroke="#3b4453" stroke-width="1"/>
<path d="M1743,80 V88 H1751 Z" fill="#f2f2f2"/>
<rect x="1771" y="69" width="15.2" height="17.4" fill="#d9d9d9"/>
<path d="M1773,73 H1784 M1773,76.5 H1784 M1773,80 H1781 M1773,83.5 H1780" stroke="#888" stroke-width="0.9"/>
<path d="M1780,75 L1788,86 M1791,75 L1783.5,86" stroke="#f0f0f0" stroke-width="1.3"/>
<circle cx="1782.5" cy="87.3" r="2" fill="#3b4453" stroke="#f0f0f0" stroke-width="1"/>
<circle cx="1789" cy="87.3" r="2" fill="#3b4453" stroke="#f0f0f0" stroke-width="1"/>
<path d="M1773,99.9 H1781 L1783,102 V116 H1773 Z" fill="#d9d9d9" stroke="#3b4453" stroke-width="0.8"/>
<path d="M1777,103.5 H1785 L1789.2,107.5 V119.8 H1777 Z" fill="#dcdcdc" stroke="#3b4453" stroke-width="0.9"/>
<path d="M1785,103.5 V107.5 H1789.2 Z" fill="#f5f5f5"/>

<!-- ===== View ===== -->
<path d="M1835,71.8 H1852.4 V84.6 H1875.1 V102.2 H1835 Z" fill="#d9d9d9"/>

<!-- ===== file tabs ===== -->
<path d="M71,216 L82,186 H185 L173,216 Z" fill="#3b4453"/>
<path d="M20,191 L11,211 M233,191 L225,211" stroke="#5a626f" stroke-width="1.1"/>
<path d="M160.5,196.5 L170,206 M170,196.5 L160.5,206" stroke="#a9aeb5" stroke-width="2"/>
<path d="M204,194 V208.5 M196.5,201.3 H211.5" stroke="#e8e8e8" stroke-width="2"/>

<!-- ===== layout tabs ===== -->
<path d="M227.7,980.7 L238.3,950.8 H318.3 L307.3,980.7 Z" fill="#3b4453"/>
<path d="M19.3,956.7 L11,976 M94,956.7 L86,976 M155,956.7 L146.7,976 M366.7,956.7 L360,976" stroke="#5a626f" stroke-width="1.1"/>
<path d="M338,958.3 V974 M330,966.2 H346" stroke="#e8e8e8" stroke-width="2"/>
</svg>
<!--/ICONS-->
<!--STATUS-->
<svg class="a" style="left:0;top:0" width="1920" height="1029">
<!-- group gaps (dark) -->
<g fill="#222832">
 <rect x="1306" y="988" width="5" height="30"/>
 <rect x="1363" y="988" width="3" height="30"/>
 <rect x="1396" y="988" width="1" height="30"/>
 <rect x="1527" y="988" width="2" height="30"/>
 <rect x="1608" y="988" width="3" height="30"/>
 <rect x="1701" y="988" width="3" height="30"/>
 <rect x="1754" y="988" width="1" height="30"/>
 <rect x="1785" y="988" width="3" height="30"/>
 <rect x="1819" y="988" width="3" height="30"/>
 <rect x="1856" y="988" width="3" height="30"/>
 <rect x="1917.5" y="988" width="2.5" height="30"/>
 <rect x="0" y="988" width="1" height="30"/>
</g>
<rect x="1529" y="989" width="28" height="28" fill="#5a8dc8"/>
<!-- snap grid -->
<path d="M1375,995 V1003 M1371,999 H1379" stroke="#d6d6d6" stroke-width="1.3"/>
<rect x="1378.5" y="1005" width="12" height="4.5" fill="#d6d6d6" stroke="#d6d6d6" stroke-width="0.6"/>
<rect x="1378" y="1004.5" width="2" height="5.5" fill="#3b4453"/>
<!-- ortho -->
<path d="M1402.5,993 V1013.2 H1422" fill="none" stroke="#d6d6d6" stroke-width="1.2"/>
<rect x="1402.5" y="1006.8" width="6.4" height="6.4" fill="none" stroke="#d6d6d6" stroke-width="1.2"/>
<!-- polar -->
<circle cx="1440" cy="1003.5" r="7.5" fill="none" stroke="#d6d6d6" stroke-width="1.2"/>
<path d="M1440,1003.5 H1452 M1440,1003.5 L1448.5,994.5" stroke="#d6d6d6" stroke-width="1.2"/>
<path d="M1463,1001 H1471 L1467,1005 Z" fill="#d6d6d6"/>
<!-- otrack -->
<path d="M1484,994 L1499.5,1010" stroke="#d65050" stroke-width="1.2"/>
<path d="M1492,993 V1013" stroke="#4cc870" stroke-width="1.2"/>
<rect x="1490" y="1000" width="4.2" height="4.2" fill="#3b4453" stroke="#d6d6d6" stroke-width="1"/>
<path d="M1512.5,1001 H1520.5 L1516.5,1005 Z" fill="#d6d6d6"/>
<!-- blue angle -->
<path d="M1533,1013.5 L1548.5,998.5 M1533.5,1010.3 H1553" stroke="#f0f0f0" stroke-width="1.2"/>
<rect x="1539" y="1002" width="4" height="4" fill="#f0f0f0"/>
<!-- osnap box -->
<rect x="1565" y="995.5" width="18" height="17.5" fill="none" stroke="#d6d6d6" stroke-width="1.2"/>
<rect x="1562.8" y="993" width="5" height="5" fill="#3b4453" stroke="#f0a060" stroke-width="1.1"/>
<path d="M1594,1001 H1602 L1598,1005 Z" fill="#d6d6d6"/>
<!-- viewport scale -->
<path d="M1616,993 H1636.3 V1013 H1616 Z" fill="none" stroke="#d6d6d6" stroke-width="1.1" stroke-dasharray="3,2"/>
<rect x="1624" y="1001" width="9.5" height="9" fill="none" stroke="#d6d6d6" stroke-width="1.2"/>
<path d="M1618,995 L1626,1003" stroke="#d6d6d6" stroke-width="1.1"/>
<path d="M1617.5,994.5 L1622.5,995 L1618,999.5 Z" fill="#d6d6d6"/>
<!-- annotation A -->
<path d="M1655,994 L1658.5,1004 L1662,1013 L1656,1009.5 L1650,1013 Z M1646,1013 L1655,994" fill="#d6d6d6"/>
<path d="M1646,1013 L1655,994 L1664,1013 L1655,1008 Z" fill="#d6d6d6"/>
<circle cx="1662" cy="997.5" r="2.8" fill="none" stroke="#d6d6d6" stroke-width="1.1"/>
<path d="M1676,1013 L1685,994 L1694,1013 L1685,1008 Z" fill="#d6d6d6"/>
<path d="M1691,993.5 L1688,998.5 H1691 L1689,1003 L1694,997 H1691 L1693.5,993.5 Z" fill="#d6d6d6"/>
<!-- gear -->
<g transform="translate(1719,1003)">
 <circle r="7.2" fill="#d6d6d6"/>
 <g fill="#d6d6d6">
  <rect x="-2.2" y="-10.2" width="4.4" height="4"/><rect x="-2.2" y="6.2" width="4.4" height="4"/>
  <rect x="-10.2" y="-2.2" width="4" height="4.4"/><rect x="6.2" y="-2.2" width="4" height="4.4"/>
  <rect x="-2.2" y="-10.2" width="4.4" height="4" transform="rotate(45)"/><rect x="-2.2" y="6.2" width="4.4" height="4" transform="rotate(45)"/>
  <rect x="-10.2" y="-2.2" width="4" height="4.4" transform="rotate(45)"/><rect x="6.2" y="-2.2" width="4" height="4.4" transform="rotate(45)"/>
 </g>
 <circle r="3.2" fill="#3b4453"/>
</g>
<path d="M1740,1001 H1748 L1744,1005 Z" fill="#d6d6d6"/>
<!-- plus -->
<path d="M1769.6,993.3 V1012 M1760,1002.7 H1779.2" stroke="#d6d6d6" stroke-width="2.2"/>
<!-- isolate -->
<rect x="1793" y="993" width="7" height="7" fill="none" stroke="#d6d6d6" stroke-width="1.1"/>
<circle cx="1808.3" cy="1001.5" r="4.2" fill="none" stroke="#d6d6d6" stroke-width="1.1"/>
<path d="M1796.5,1013 L1800.5,1005.5 L1804.5,1013 Z" fill="none" stroke="#d6d6d6" stroke-width="1.1"/>
<!-- hw accel -->
<path d="M1826,990 H1844 L1850,995.5 V1007 H1826 Z" fill="#3c78c8"/>
<path d="M1835,990 V1003 M1826,995 H1844" stroke="#f0f0f0" stroke-width="1"/>
<circle cx="1831.5" cy="995" r="1.6" fill="none" stroke="#f0f0f0" stroke-width="0.9"/>
<rect x="1826" y="1005" width="10" height="7" fill="#f0b020"/>
<path d="M1836,1010 L1840,1014.5 L1850,1003.5" fill="none" stroke="#3cbc5c" stroke-width="2.3"/>
<!-- fullscreen -->
<rect x="1864.5" y="995.5" width="19.5" height="14.5" fill="none" stroke="#d6d6d6" stroke-width="1.2"/>
<path d="M1872,1002 L1867.5,1006.5 M1876.5,1003 L1881,998.5" stroke="#d6d6d6" stroke-width="1.1"/>
<path d="M1867,1007 V1003.5 M1867,1007 H1870.5 M1881.5,998 H1878 M1881.5,998 V1001.5" stroke="#d6d6d6" stroke-width="1.1"/>
<!-- menu -->
<path d="M1894,995 H1914 M1894,1002.5 H1914 M1894,1010 H1914" stroke="#e8e8e8" stroke-width="2"/>
<!-- taskbar artifact -->
<rect x="0" y="1019.5" width="1920" height="1" fill="#4e4e4e"/>
<path d="M44,1029 V1027.5 Q48.5,1026 53,1027.5 V1029 Z" fill="#d03030"/>
<path d="M1352,1029 V1027 Q1352,1025 1355,1025 H1397 Q1400,1025 1400,1027 V1029 Z" fill="#2a2a2a"/>
</svg>
<!--/STATUS-->
<!--TEXTS-->
<div class="t" style="left:695.00px;top:6.64px;font-size:15px;line-height:15px;color:#f2f2f2;letter-spacing:-0.17px">Autodesk AutoCAD 2023</div>
<div class="t" style="left:874.00px;top:6.64px;font-size:15px;line-height:15px;color:#f2f2f2;letter-spacing:-0.11px">uhouse.dwg</div>
<div class="t" style="left:405.00px;top:6.54px;font-size:15px;line-height:15px;color:#6db5f2;letter-spacing:-0.62px">Share</div>
<div class="t" style="left:1218.00px;top:6.27px;font-size:14px;line-height:14px;color:#b2b2b2;font-style:italic;letter-spacing:-0.39px">Type a keyword or phrase</div>
<div class="t" style="left:1500.50px;top:6.04px;font-size:15px;line-height:15px;color:#f0f0f0;letter-spacing:0.28px">bmcgarrido</div>
<div class="t" style="left:13.50px;top:38.74px;font-size:15px;line-height:15px;color:#f0f0f0;letter-spacing:0.50px">Home</div>
<div class="t" style="left:79.00px;top:38.74px;font-size:15px;line-height:15px;color:#f0f0f0;letter-spacing:-0.20px">Insert</div>
<div class="t" style="left:140.00px;top:38.74px;font-size:15px;line-height:15px;color:#f0f0f0;letter-spacing:0.14px">Annotate</div>
<div class="t" style="left:225.00px;top:38.74px;font-size:15px;line-height:15px;color:#f0f0f0;letter-spacing:-0.11px">Parametric</div>
<div class="t" style="left:320.00px;top:38.74px;font-size:15px;line-height:15px;color:#f0f0f0;letter-spacing:-0.33px">View</div>
<div class="t" style="left:375.00px;top:38.74px;font-size:15px;line-height:15px;color:#f0f0f0;letter-spacing:0.20px">Manage</div>
<div class="t" style="left:454.00px;top:38.74px;font-size:15px;line-height:15px;color:#f0f0f0;letter-spacing:0.20px">Output</div>
<div class="t" style="left:524.00px;top:38.74px;font-size:15px;line-height:15px;color:#f0f0f0;letter-spacing:0.17px">Add-ins</div>
<div class="t" style="left:600.00px;top:38.74px;font-size:15px;line-height:15px;color:#f0f0f0;letter-spacing:0.20px">Collaborate</div>
<div class="t" style="left:701.50px;top:38.74px;font-size:15px;line-height:15px;color:#f0f0f0;letter-spacing:-0.38px">Express Tools</div>
<div class="t" style="left:813.50px;top:38.74px;font-size:15px;line-height:15px;color:#f0f0f0">Featured Apps</div>
<div class="t" style="left:933.50px;top:38.74px;font-size:15px;line-height:15px;color:#f0f0f0;letter-spacing:-0.10px">Layout</div>
<div class="t" style="left:12.60px;top:114.14px;font-size:15px;line-height:15px;color:#f0f0f0;letter-spacing:-0.27px">Line</div>
<div class="t" style="left:53.70px;top:114.14px;font-size:15px;line-height:15px;color:#f0f0f0;letter-spacing:-0.10px">Polyline</div>
<div class="t" style="left:123.25px;top:114.74px;font-size:15px;line-height:15px;color:#f0f0f0;letter-spacing:-0.32px">Circle</div>
<div class="t" style="left:187.40px;top:114.74px;font-size:15px;line-height:15px;color:#f0f0f0;letter-spacing:-0.20px">Arc</div>
<div class="t" style="left:310.25px;top:72.04px;font-size:15px;line-height:15px;color:#f0f0f0;letter-spacing:0.42px">Move</div>
<div class="t" style="left:312.00px;top:103.04px;font-size:15px;line-height:15px;color:#f0f0f0;letter-spacing:-0.25px">Copy</div>
<div class="t" style="left:311.50px;top:134.54px;font-size:15px;line-height:15px;color:#f0f0f0;letter-spacing:-0.08px">Stretch</div>
<div class="t" style="left:402.75px;top:72.04px;font-size:15px;line-height:15px;color:#f0f0f0">Rotate</div>
<div class="t" style="left:401.50px;top:103.04px;font-size:15px;line-height:15px;color:#f0f0f0;letter-spacing:0.50px">Mirror</div>
<div class="t" style="left:401.50px;top:134.54px;font-size:15px;line-height:15px;color:#f0f0f0;letter-spacing:-0.38px">Scale</div>
<div class="t" style="left:490.50px;top:72.04px;font-size:15px;line-height:15px;color:#f0f0f0;letter-spacing:-0.25px">Trim</div>
<div class="t" style="left:490.25px;top:103.04px;font-size:15px;line-height:15px;color:#f0f0f0">Fillet</div>
<div class="t" style="left:490.50px;top:134.54px;font-size:15px;line-height:15px;color:#f0f0f0;letter-spacing:-0.25px">Array</div>
<div class="t" style="left:610.75px;top:114.54px;font-size:15px;line-height:15px;color:#f0f0f0;letter-spacing:-0.58px">Text</div>
<div class="t" style="left:652.75px;top:114.54px;font-size:15px;line-height:15px;color:#f0f0f0;letter-spacing:0.12px">Dimension</div>
<div class="t" style="left:798.25px;top:114.54px;font-size:15px;line-height:15px;color:#f0f0f0;letter-spacing:-0.50px">Layer</div>
<div class="t" style="left:782.25px;top:134.54px;font-size:15px;line-height:15px;color:#f0f0f0">Properties</div>
<div class="t" style="left:981.50px;top:72.04px;font-size:15px;line-height:15px;color:#f0f0f0;letter-spacing:0.10px">planta</div>
<div class="t" style="left:1126.00px;top:113.54px;font-size:15px;line-height:15px;color:#f0f0f0;letter-spacing:-0.30px">Insert</div>
<div class="t" style="left:1236.00px;top:114.04px;font-size:15px;line-height:15px;color:#f0f0f0;letter-spacing:0.50px">Match</div>
<div class="t" style="left:1223.25px;top:134.54px;font-size:15px;line-height:15px;color:#f0f0f0;letter-spacing:-0.06px">Properties</div>
<div class="t" style="left:1354.50px;top:72.04px;font-size:15px;line-height:15px;color:#f0f0f0;letter-spacing:-0.50px">ByLayer</div>
<div class="t" style="left:1411.00px;top:103.34px;font-size:15px;line-height:15px;color:#f0f0f0;letter-spacing:-0.50px">ByLayer</div>
<div class="t" style="left:1411.00px;top:134.54px;font-size:15px;line-height:15px;color:#f0f0f0;letter-spacing:-0.50px">ByLayer</div>
<div class="t" style="left:1501.00px;top:115.04px;font-size:15px;line-height:15px;color:#f0f0f0;letter-spacing:-0.07px">Group</div>
<div class="t" style="left:1596.00px;top:115.04px;font-size:15px;line-height:15px;color:#f0f0f0;letter-spacing:-0.20px">Measure</div>
<div class="t" style="left:1717.00px;top:115.54px;font-size:15px;line-height:15px;color:#f0f0f0;letter-spacing:-0.75px">Paste</div>
<div class="t" style="left:1838.00px;top:115.04px;font-size:15px;line-height:15px;color:#f0f0f0;letter-spacing:-0.67px">Base</div>
<div class="t" style="left:112.75px;top:164.04px;font-size:15px;line-height:15px;color:#f0f0f0;letter-spacing:0.08px">Draw</div>
<div class="t" style="left:402.25px;top:164.04px;font-size:15px;line-height:15px;color:#f0f0f0;letter-spacing:0.55px">Modify</div>
<div class="t" style="left:639.50px;top:164.04px;font-size:15px;line-height:15px;color:#f0f0f0;letter-spacing:0.28px">Annotation</div>
<div class="t" style="left:918.50px;top:164.04px;font-size:15px;line-height:15px;color:#f0f0f0;letter-spacing:-0.80px">Layers</div>
<div class="t" style="left:1140.75px;top:164.04px;font-size:15px;line-height:15px;color:#f0f0f0;letter-spacing:-0.06px">Block</div>
<div class="t" style="left:1305.25px;top:164.04px;font-size:15px;line-height:15px;color:#f0f0f0;letter-spacing:-0.08px">Properties</div>
<div class="t" style="left:1506.00px;top:164.04px;font-size:15px;line-height:15px;color:#f0f0f0;letter-spacing:-0.40px">Groups</div>
<div class="t" style="left:1606.00px;top:164.04px;font-size:15px;line-height:15px;color:#f0f0f0;letter-spacing:0.38px">Utilities</div>
<div class="t" style="left:1725.00px;top:164.04px;font-size:15px;line-height:15px;color:#f0f0f0;letter-spacing:0.20px">Clipboard</div>
<div class="t" style="left:1820.70px;top:164.04px;font-size:15px;line-height:15px;color:#f0f0f0;letter-spacing:-0.43px">View</div>
<div class="t" style="left:29.50px;top:193.84px;font-size:15px;line-height:15px;color:#f0f0f0;letter-spacing:-0.12px">Start</div>
<div class="t" style="left:90.40px;top:193.84px;font-size:15px;line-height:15px;color:#ffffff;font-weight:700;letter-spacing:-0.07px">uhouse*</div>
<div class="t" style="left:30.00px;top:959.34px;font-size:15px;line-height:15px;color:#f0f0f0;letter-spacing:0.80px">Model</div>
<div class="t" style="left:104.00px;top:959.34px;font-size:15px;line-height:15px;color:#f0f0f0;letter-spacing:0.10px">A3rd</div>
<div class="t" style="left:165.00px;top:959.34px;font-size:15px;line-height:15px;color:#f0f0f0;letter-spacing:-0.12px">Layout1</div>
<div class="t" style="left:248.30px;top:959.34px;font-size:15px;line-height:15px;color:#ffffff;font-weight:700;letter-spacing:-0.43px">a4_alto</div>
<div class="t" style="left:1314.30px;top:996.24px;font-size:15px;line-height:15px;color:#f0f0f0;letter-spacing:-1.12px">PAPER</div>
<!--/TEXTS-->
</body></html>
